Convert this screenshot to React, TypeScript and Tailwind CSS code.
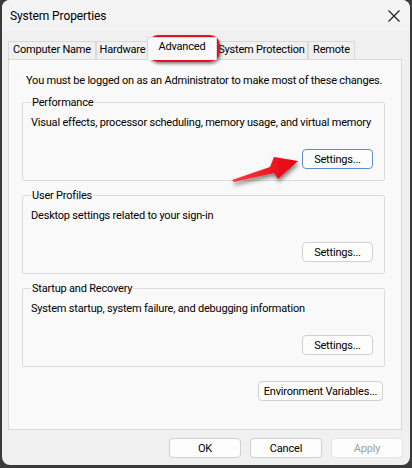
import React from "react"

const font = { fontFamily: 'Roboto, "Liberation Sans", sans-serif' }

function Btn({ label, w, primary, disabled }: { label: string; w: string; primary?: boolean; disabled?: boolean }) {
  return (
    <button
      className={`${w} h-[20px] rounded-[4px] border text-[11px] tracking-[-0.2px] leading-none whitespace-nowrap ${
        primary ? "border-[#5a8fd0] bg-[#fdfdfd]" : "border-[#d0d0d0] bg-[#fdfdfd]"
      } ${disabled ? "text-[#a0a0a0] border-[#e3e3e3] bg-[#f5f5f5]" : "text-black"}`}
    >
      {label}
    </button>
  )
}

function Group({ title, desc, primary }: { title: string; desc: string; primary?: boolean }) {
  return (
    <fieldset className="min-w-0 border border-[#dcdcdc] rounded-[2px] h-[86px] px-[8px]">
      <legend className="px-[1px] text-[11px] tracking-[-0.2px] leading-[15px] text-black whitespace-nowrap">{title}</legend>
      <div className="text-[11px] tracking-[-0.2px] leading-[15px] text-black mt-[5px] whitespace-nowrap">{desc}</div>
      <div className="flex justify-end mt-[19px] pr-[3px]">
        <Btn label="Settings..." w="w-[71px]" primary={primary} />
      </div>
    </fieldset>
  )
}

export default function App() {
  const tabs = [
    { label: "Computer Name", w: "w-[88px]" },
    { label: "Hardware", w: "w-[53px]" },
    { label: "Advanced", w: "w-[70px]", active: true },
    { label: "System Protection", w: "w-[93px]" },
    { label: "Remote", w: "w-[47px]" },
  ]
  return (
    <div className="w-[412px] h-[468px] bg-[#3a3a3a] relative" style={font}>
      <div className="mx-[2px] h-[465px] rounded-[8px] bg-[#f0f0f0] flex flex-col overflow-hidden">
        {/* Title bar */}
        <div className="h-[31px] flex items-center justify-between bg-[#f3f3f3] pl-[8px] pr-[10px]">
          <span className="text-[12px] tracking-[-0.1px] text-black">System Properties</span>
          <svg width="12" height="12" viewBox="0 0 12 12">
            <path d="M0.5 0.5 L11.5 11.5 M11.5 0.5 L0.5 11.5" stroke="#1a1a1a" strokeWidth="1.1" />
          </svg>
        </div>

        {/* Tabs */}
        <div className="flex items-end h-[22px] mt-[6px] pl-[6px]">
          {tabs.map((t) => (
            <div
              key={t.label}
              className={`${t.w} flex items-center justify-center text-[11px] tracking-[-0.2px] text-black whitespace-nowrap border-[#d9d9d9] border-t border-l border-r ${
                t.active ? "h-[23px] bg-[#f9f9f9] -mb-px z-10 -mx-[2px] pb-[3px]" : "h-[18px] bg-[#f0f0f0]"
              }`}
            >
              {t.label}
            </div>
          ))}
        </div>

        {/* Panel */}
        <div className="ml-[6px] w-[394px] h-[371px] border border-[#d9d9d9] bg-[#f9f9f9] flex flex-col">
          <div className="pl-[17px] pt-[13px] text-[11px] tracking-[-0.2px] leading-[16px] text-black whitespace-nowrap">
            You must be logged on as an Administrator to make most of these changes.
          </div>
          <div className="pl-[13px] pr-[16px] mt-[6px] flex flex-col gap-[7px]">
            <Group title="Performance" desc="Visual effects, processor scheduling, memory usage, and virtual memory" primary />
            <Group title="User Profiles" desc="Desktop settings related to your sign-in" />
            <Group title="Startup and Recovery" desc="System startup, system failure, and debugging information" />
          </div>
          <div className="flex justify-end pr-[18px] mt-[14px]">
            <Btn label="Environment Variables..." w="w-[125px]" />
          </div>
        </div>

        {/* Bottom buttons */}
        <div className="flex justify-end gap-[9px] pr-[7px] mt-[8px]">
          <Btn label="OK" w="w-[72px]" />
          <Btn label="Cancel" w="w-[72px]" />
          <Btn label="Apply" w="w-[72px]" disabled />
        </div>
      </div>

      {/* Red highlight around Advanced tab */}
      <div className="absolute left-[148px] top-[35px] w-[72px] h-[27px] rounded-[10px] border-[3px] border-[#e3121b] shadow-[1px_2px_3px_rgba(0,0,0,0.45)]" />

      {/* Red arrow */}
      <svg className="absolute left-[226px] top-[148px]" width="80" height="44" viewBox="0 0 80 44">
        <defs>
          <linearGradient id="ar" x1="0" y1="0" x2="1" y2="0">
            <stop offset="0" stopColor="#ff3b3b" />
            <stop offset="1" stopColor="#e00010" />
          </linearGradient>
          <filter id="sh" x="-20%" y="-30%" width="150%" height="180%">
            <feDropShadow dx="1" dy="3" stdDeviation="2" floodColor="#000" floodOpacity="0.5" />
          </filter>
        </defs>
        <polygon points="6,32 44,19 48,9 72,13 52,31 48,25 8,34" fill="url(#ar)" filter="url(#sh)" />
      </svg>
    </div>
  )
}
